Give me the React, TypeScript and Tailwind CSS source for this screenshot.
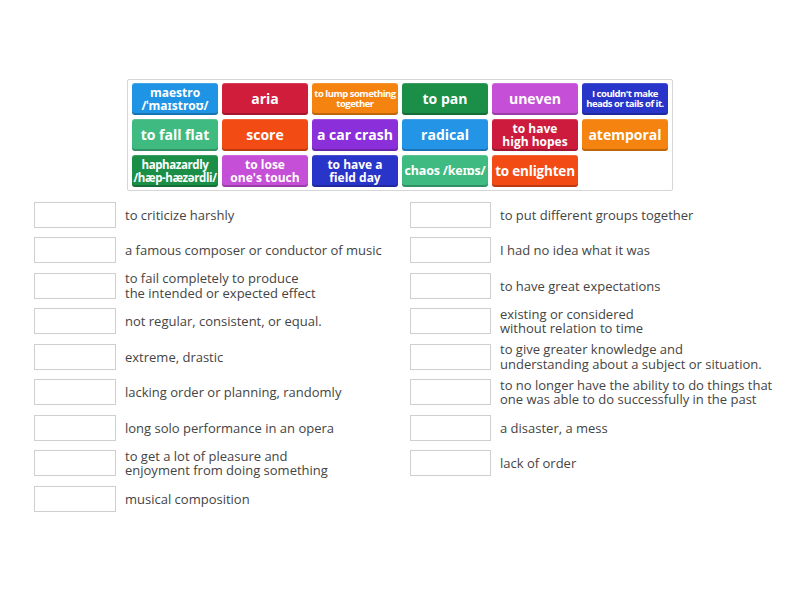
import React from 'react'

type Tile = { label: string; bg: string; size: string }

const tiles: Tile[] = [
  { label: 'maestro\n/ˈmaɪstroʊ/', bg: 'bg-[#1f94e4]', size: 'text-[12px] leading-[13px]' },
  { label: 'aria', bg: 'bg-[#d11d3c]', size: 'text-[14px] leading-[16px]' },
  { label: 'to lump something\ntogether', bg: 'bg-[#f5830f]', size: 'text-[9.5px] leading-[10px] tracking-[-0.5px]' },
  { label: 'to pan', bg: 'bg-[#1b8e48]', size: 'text-[14px] leading-[16px]' },
  { label: 'uneven', bg: 'bg-[#c54fd6]', size: 'text-[14px] leading-[16px]' },
  { label: "I couldn't make\nheads or tails of it.", bg: 'bg-[#2934c9]', size: 'text-[9.5px] leading-[10.5px] tracking-[-0.5px]' },
  { label: 'to fall flat', bg: 'bg-[#3fba80]', size: 'text-[14px] leading-[16px]' },
  { label: 'score', bg: 'bg-[#f24b14]', size: 'text-[14px] leading-[16px]' },
  { label: 'a car crash', bg: 'bg-[#8a2fd9]', size: 'text-[14px] leading-[16px]' },
  { label: 'radical', bg: 'bg-[#2394e6]', size: 'text-[14px] leading-[16px]' },
  { label: 'to have\nhigh hopes', bg: 'bg-[#cd1b3d]', size: 'text-[12px] leading-[13px]' },
  { label: 'atemporal', bg: 'bg-[#f5830f]', size: 'text-[14px] leading-[16px]' },
  { label: 'haphazardly\n/hæp-hæzərdli/', bg: 'bg-[#1b8e48]', size: 'text-[11.5px] leading-[13px] tracking-[-0.4px]' },
  { label: "to lose\none's touch", bg: 'bg-[#c54fd6]', size: 'text-[12px] leading-[13px]' },
  { label: 'to have a\nfield day', bg: 'bg-[#2934c9]', size: 'text-[12px] leading-[13px]' },
  { label: 'chaos /keɪɒs/', bg: 'bg-[#3fba80]', size: 'text-[12.5px] leading-[14px] tracking-[-0.2px]' },
  { label: 'to enlighten', bg: 'bg-[#f24b14]', size: 'text-[13.5px] leading-[16px] tracking-[-0.2px]' },
]

const left = [
  'to criticize harshly',
  'a famous composer or conductor of music',
  'to fail completely to produce\nthe intended or expected effect',
  'not regular, consistent, or equal.',
  'extreme, drastic',
  'lacking order or planning, randomly',
  'long solo performance in an opera',
  'to get a lot of pleasure and\nenjoyment from doing something',
  'musical composition',
]

const right = [
  'to put different groups together',
  'I had no idea what it was',
  'to have great expectations',
  'existing or considered\nwithout relation to time',
  'to give greater knowledge and\nunderstanding about a subject or situation.',
  'to no longer have the ability to do things that\none was able to do successfully in the past',
  'a disaster, a mess',
  'lack of order',
]

function Slot({ text, boxW }: { text: string; boxW: string }) {
  return (
    <div className="h-[35.5px] flex items-center">
      <div className={`${boxW} h-[26px] border border-[#cfcfcf] bg-white shrink-0`} />
      <div className="ml-[9px] text-[13px] leading-[14.5px] text-[#444] whitespace-pre">{text}</div>
    </div>
  )
}

export default function App() {
  return (
    <div
      className="w-[800px] h-[600px] bg-white pt-[79px]"
      style={{ fontFamily: '"Open Sans", "Noto Sans", sans-serif' }}
    >
      {/* tile bank */}
      <div className="mx-auto w-[546px] border border-[#d6d6d6] rounded-[2px] px-[4px] py-[3px] grid grid-cols-[repeat(6,86px)] gap-[4px]">
        {tiles.map((t) => (
          <div
            key={t.label}
            className={`${t.bg} h-[32px] rounded-[3px] flex items-center justify-center text-center text-white font-bold whitespace-pre overflow-hidden shadow-[inset_0_-2px_0_rgba(0,0,0,0.22),inset_0_1px_0_rgba(255,255,255,0.15)] ${t.size}`}
          >
            {t.label}
          </div>
        ))}
      </div>

      {/* answer slots */}
      <div className="flex mt-[6px]">
        <div className="pl-[34px] w-[410px]">
          {left.map((t) => (
            <Slot key={t} text={t} boxW="w-[82px]" />
          ))}
        </div>
        <div>
          {right.map((t) => (
            <Slot key={t} text={t} boxW="w-[81px]" />
          ))}
        </div>
      </div>
    </div>
  )
}
